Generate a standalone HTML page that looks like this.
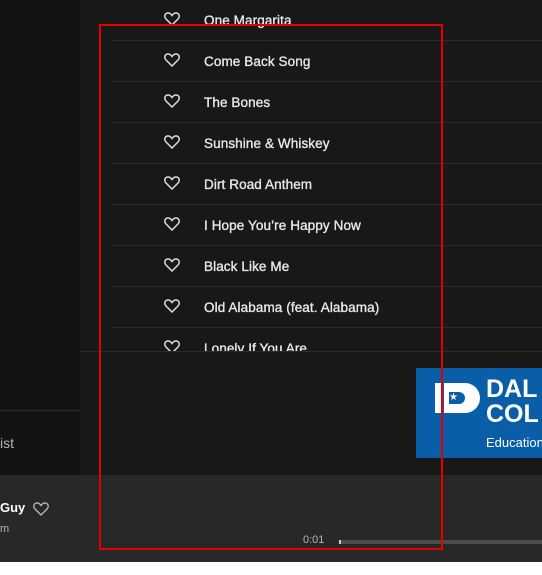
<!DOCTYPE html>
<html><head><meta charset="utf-8"><style>
*{margin:0;padding:0;box-sizing:border-box}
body{width:542px;height:575px;background:#fff;position:relative;overflow:hidden;font-family:"Liberation Sans",sans-serif}
.side{position:absolute;left:0;top:0;width:80px;height:475px;background:#121212}
.sideline{position:absolute;left:0;top:410px;width:80px;height:1px;background:#2a2a2a}
.main{position:absolute;left:80px;top:0;width:462px;height:475px;background:#181818}
.row{position:absolute;left:112px;width:430px;height:41px;border-bottom:1px solid #2a2a2a}
.row span{position:absolute;left:92px;top:13px;color:#e8e8e8;font-size:13.5px;font-weight:normal;letter-spacing:0.1px;-webkit-text-stroke:0.35px #e8e8e8}
.row svg{position:absolute;left:52px;top:12px}
.bar{position:absolute;left:0;top:475px;width:542px;height:87px;background:#282828}
.box{position:absolute;left:99px;top:24px;width:344px;height:526px;border:2px solid #e50000}
</style></head><body>
<div class="side"></div><div class="sideline"></div>
<div style="position:absolute;left:0;top:435px;color:#b3b3b3;font-size:14px">ist</div>
<div class="main"></div>
<div style="position:absolute;left:0;top:0;width:542px;height:352px;overflow:hidden">
<div class="row" style="top:0"><svg width="16" height="14" viewBox="0 0 16 14"><path d="M8 13 L2 7 C0 5 0.5 1.5 3.5 1 C5.5 0.7 7 2 8 3.5 C9 2 10.5 0.7 12.5 1 C15.5 1.5 16 5 14 7 Z" fill="none" stroke="#ddd" stroke-width="1.5"/></svg><span>One Margarita</span></div>
<div class="row" style="top:41px"><svg width="16" height="14" viewBox="0 0 16 14"><path d="M8 13 L2 7 C0 5 0.5 1.5 3.5 1 C5.5 0.7 7 2 8 3.5 C9 2 10.5 0.7 12.5 1 C15.5 1.5 16 5 14 7 Z" fill="none" stroke="#ddd" stroke-width="1.5"/></svg><span>Come Back Song</span></div>
<div class="row" style="top:82px"><svg width="16" height="14" viewBox="0 0 16 14"><path d="M8 13 L2 7 C0 5 0.5 1.5 3.5 1 C5.5 0.7 7 2 8 3.5 C9 2 10.5 0.7 12.5 1 C15.5 1.5 16 5 14 7 Z" fill="none" stroke="#ddd" stroke-width="1.5"/></svg><span>The Bones</span></div>
<div class="row" style="top:123px"><svg width="16" height="14" viewBox="0 0 16 14"><path d="M8 13 L2 7 C0 5 0.5 1.5 3.5 1 C5.5 0.7 7 2 8 3.5 C9 2 10.5 0.7 12.5 1 C15.5 1.5 16 5 14 7 Z" fill="none" stroke="#ddd" stroke-width="1.5"/></svg><span>Sunshine &amp; Whiskey</span></div>
<div class="row" style="top:164px"><svg width="16" height="14" viewBox="0 0 16 14"><path d="M8 13 L2 7 C0 5 0.5 1.5 3.5 1 C5.5 0.7 7 2 8 3.5 C9 2 10.5 0.7 12.5 1 C15.5 1.5 16 5 14 7 Z" fill="none" stroke="#ddd" stroke-width="1.5"/></svg><span>Dirt Road Anthem</span></div>
<div class="row" style="top:205px"><svg width="16" height="14" viewBox="0 0 16 14"><path d="M8 13 L2 7 C0 5 0.5 1.5 3.5 1 C5.5 0.7 7 2 8 3.5 C9 2 10.5 0.7 12.5 1 C15.5 1.5 16 5 14 7 Z" fill="none" stroke="#ddd" stroke-width="1.5"/></svg><span>I Hope You’re Happy Now</span></div>
<div class="row" style="top:246px"><svg width="16" height="14" viewBox="0 0 16 14"><path d="M8 13 L2 7 C0 5 0.5 1.5 3.5 1 C5.5 0.7 7 2 8 3.5 C9 2 10.5 0.7 12.5 1 C15.5 1.5 16 5 14 7 Z" fill="none" stroke="#ddd" stroke-width="1.5"/></svg><span>Black Like Me</span></div>
<div class="row" style="top:287px"><svg width="16" height="14" viewBox="0 0 16 14"><path d="M8 13 L2 7 C0 5 0.5 1.5 3.5 1 C5.5 0.7 7 2 8 3.5 C9 2 10.5 0.7 12.5 1 C15.5 1.5 16 5 14 7 Z" fill="none" stroke="#ddd" stroke-width="1.5"/></svg><span>Old Alabama (feat. Alabama)</span></div>
<div class="row" style="top:328px;border:none"><svg width="16" height="14" viewBox="0 0 16 14"><path d="M8 13 L2 7 C0 5 0.5 1.5 3.5 1 C5.5 0.7 7 2 8 3.5 C9 2 10.5 0.7 12.5 1 C15.5 1.5 16 5 14 7 Z" fill="none" stroke="#ddd" stroke-width="1.5"/></svg><span>Lonely If You Are</span></div>
</div>
<div style="position:absolute;left:80px;top:351px;width:462px;height:1px;background:#2a2a2a"></div>
<div style="position:absolute;left:416px;top:368px;width:126px;height:90px;background:#0a5ea8;overflow:hidden">
<div style="position:absolute;left:19px;top:15px;width:7px;height:30px;background:#fff"></div>
<div style="position:absolute;left:28px;top:15px;width:36px;height:30px;background:#fff;border-radius:0 16px 16px 0"></div>
<div style="position:absolute;left:33px;top:24px;width:16px;height:12px;background:#0a5ea8;border-radius:0 6px 6px 0;color:#fff;font-size:10px;line-height:12px">★</div>
<div style="position:absolute;left:70px;top:9px;color:#fff;font-weight:bold;font-size:25px;line-height:25px">DAL<br>COL</div>
<div style="position:absolute;left:70px;top:67px;color:#fff;font-size:13px">Education</div>
</div>
<div class="bar"></div>
<div style="position:absolute;left:0;top:500px;color:#fff;font-size:13px;font-weight:bold">Guy</div>
<svg style="position:absolute;left:33px;top:502px" width="16" height="14" viewBox="0 0 16 14"><path d="M8 13 L2 7 C0 5 0.5 1.5 3.5 1 C5.5 0.7 7 2 8 3.5 C9 2 10.5 0.7 12.5 1 C15.5 1.5 16 5 14 7 Z" fill="none" stroke="#bbb" stroke-width="1.3"/></svg>
<div style="position:absolute;left:0;top:523px;color:#b3b3b3;font-size:11px">m</div>
<div style="position:absolute;left:303px;top:534px;color:#b3b3b3;font-size:11px">0:01</div>
<div style="position:absolute;left:339px;top:540px;width:203px;height:4px;background:#4d4d4d"></div>
<div style="position:absolute;left:339px;top:540px;width:2px;height:4px;background:#ccc"></div>
<div class="box"></div>
</body></html>
